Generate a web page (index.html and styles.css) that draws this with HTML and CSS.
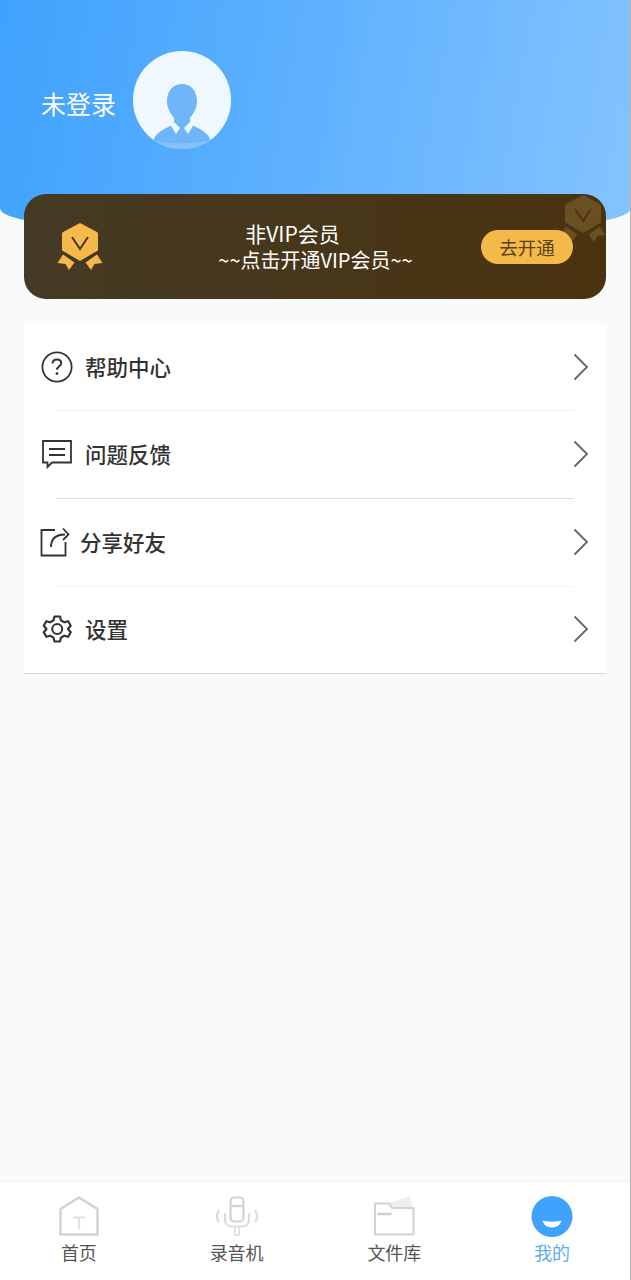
FILE: index.html
```html
<!DOCTYPE html>
<html lang="zh-CN">
<head>
<meta charset="utf-8">
<title>我的</title>
<link rel="stylesheet" href="styles.css">
</head>
<body>
<div class="page">
  <header class="hero">
    <span class="login-text">未登录</span>
    <svg class="avatar" viewBox="0 0 98 98">
      <defs><clipPath id="avatar-clip"><circle cx="49" cy="49" r="49"/></clipPath></defs>
      <circle cx="49" cy="49" r="49" fill="#eff8fe"/>
      <g clip-path="url(#avatar-clip)">
        <path d="M20 90C22 82 32 77 42 73L56 73C66 77 76 82 78 90L78 98L20 98Z" fill="#6fb5fa"/>
        <path d="M14 87C30 94 68 94 84 87L84 100L14 100Z" fill="#85c1fb"/>
        <path d="M49 33C58 33 64 40 64 50C64 58 60 63 57 67L57 75L41 75L41 67C38 63 34 58 34 50C34 40 40 33 49 33Z" fill="#6fb5fa"/>
        <path d="M40 70L47 77L43 83L37 73Z" fill="#eff8fe"/>
        <path d="M58 70L51 77L55 83L61 73Z" fill="#eff8fe"/>
      </g>
    </svg>
  </header>

  <section class="vip-card">
    <svg class="medal" viewBox="0 0 90 90">
      <path d="M50 23L67 32Q68 33 68 34L68 50Q68 51 67 51L50 61L33 51Q32 51 32 50L32 34Q32 33 33 32Z" fill="#f5b94a"/>
      <path d="M33 54.500L44.500 62.500L39 70L35.500 64L27.500 63Z" fill="#f5b94a"/>
      <path d="M67 54.500L55.500 62.500L61 70L64.500 64L72.500 63Z" fill="#f5b94a"/>
      <path d="M42 37L50 49L58 37" fill="none" stroke="#443520" stroke-width="2"/>
    </svg>
    <div class="vip-text">
      <div class="vip-title">非VIP会员</div>
      <div class="vip-sub">~~点击开通VIP会员~~</div>
    </div>
    <button class="vip-btn">去开通</button>
    <svg class="medal-mark" viewBox="0 0 90 90">
      <path d="M50 23L67 32Q68 33 68 34L68 50Q68 51 67 51L50 61L33 51Q32 51 32 50L32 34Q32 33 33 32Z" fill="#6a4f22"/>
      <path d="M33 54.500L44.500 62.500L39 70L35.500 64L27.500 63Z" fill="#6a4f22"/>
      <path d="M67 54.500L55.500 62.500L61 70L64.500 64L72.500 63Z" fill="#6a4f22"/>
      <path d="M42 37L50 49L58 37" fill="none" stroke="#4a3412" stroke-width="2"/>
    </svg>
  </section>

  <nav class="menu">
    <div class="row row-first">
      <svg class="row-icon" viewBox="0 0 34 34">
        <circle cx="17" cy="17" r="14.600" fill="none" stroke="#333" stroke-width="1.800"/>
        <path d="M12.600 13.600C12.600 10.800 14.600 9.600 17 9.600C19.400 9.600 21.200 11 21.200 13.200C21.200 16.200 17 16.400 17 19.800" fill="none" stroke="#333" stroke-width="2"/>
        <circle cx="17" cy="23.600" r="1.400" fill="#333"/>
      </svg>
      <span class="row-label">帮助中心</span>
      <svg class="chev" viewBox="0 0 16 28"><path d="M1.500 1.500L14 14L1.500 26.500" fill="none" stroke="#666" stroke-width="1.800"/></svg>
    </div>
    <div class="row row-strong">
      <svg class="row-icon" viewBox="0 0 34 34">
        <path d="M3 4H31V25.500H12L7.500 30V25.500H3Z" fill="none" stroke="#333" stroke-width="1.800"/>
        <path d="M9 12H25M9 18H25" fill="none" stroke="#333" stroke-width="1.800"/>
      </svg>
      <span class="row-label">问题反馈</span>
      <svg class="chev" viewBox="0 0 16 28"><path d="M1.500 1.500L14 14L1.500 26.500" fill="none" stroke="#666" stroke-width="1.800"/></svg>
    </div>
    <div class="row row-faint row-share">
      <svg class="row-icon" viewBox="0 0 34 34">
        <path d="M16 5H2.500V30.500H26.500V17" fill="none" stroke="#333" stroke-width="1.800"/>
        <path d="M12 22C12 14 17 9.500 26 9.500" fill="none" stroke="#333" stroke-width="1.800"/>
        <path d="M24 3.500L29.500 9.500L24 15" fill="none" stroke="#333" stroke-width="1.800"/>
      </svg>
      <span class="row-label">分享好友</span>
      <svg class="chev" viewBox="0 0 16 28"><path d="M1.500 1.500L14 14L1.500 26.500" fill="none" stroke="#666" stroke-width="1.800"/></svg>
    </div>
    <div class="row row-last">
      <svg class="row-icon" viewBox="0 0 34 34">
        <path d="M14.500 4.500H20L21 8.400L24.300 10.300L28.200 9.200L30.700 13.700L28 17L30.700 20.300L28.200 24.800L24.300 23.700L21 25.600L20 29.500H14.500L13.500 25.600L10.200 23.700L6.300 24.800L3.800 20.300L6.500 17L3.800 13.700L6.300 9.200L10.200 10.300L13.500 8.400Z" fill="none" stroke="#333" stroke-width="2.200" stroke-linejoin="round"/>
        <circle cx="17.200" cy="17" r="5" fill="none" stroke="#333" stroke-width="2"/>
      </svg>
      <span class="row-label">设置</span>
      <svg class="chev" viewBox="0 0 16 28"><path d="M1.500 1.500L14 14L1.500 26.500" fill="none" stroke="#666" stroke-width="1.800"/></svg>
    </div>
  </nav>

  <footer class="tabbar">
    <div class="tab">
      <svg class="tab-icon" viewBox="0 0 44 44">
        <path d="M3.500 14L22 2.500L40.500 14V39.500H3.500Z" fill="none" stroke="#d2d2d2" stroke-width="2.500" stroke-linejoin="round"/>
        <path d="M16 22.500H28M22 22.500V34" fill="none" stroke="#e2e2e2" stroke-width="2.200"/>
      </svg>
      <span class="tab-label">首页</span>
    </div>
    <div class="tab">
      <svg class="tab-icon" viewBox="0 0 44 44">
        <rect x="15.500" y="2.500" width="13" height="24" rx="4" fill="none" stroke="#d2d2d2" stroke-width="2.200"/>
        <path d="M15.500 11H28.500" stroke="#d2d2d2" stroke-width="2.200"/>
        <path d="M10 18V25C10 29 13 31.500 17 31.500H27C31 31.500 34 29 34 25V18" fill="none" stroke="#dcdcdc" stroke-width="2.200"/>
        <path d="M20 31.500V40H24V31.500" fill="none" stroke="#e2e2e2" stroke-width="2"/>
        <path d="M4 15C1.500 19 1.500 24 4 27M40 15C42.500 19 42.500 24 40 27" fill="none" stroke="#dcdcdc" stroke-width="2.400"/>
      </svg>
      <span class="tab-label">录音机</span>
    </div>
    <div class="tab">
      <svg class="tab-icon" viewBox="0 0 44 44">
        <path d="M17 8L38 1L41 13L20 13Z" fill="#eeeeee"/>
        <path d="M3 8.500H17L20 13H41.500V39.500H3Z" fill="#fff" stroke="#d2d2d2" stroke-width="2" stroke-linejoin="round"/>
        <path d="M5.500 19H19.500" stroke="#cfcfcf" stroke-width="2.500"/>
      </svg>
      <span class="tab-label">文件库</span>
    </div>
    <div class="tab tab-active">
      <svg class="tab-icon" viewBox="0 0 44 44">
        <circle cx="22" cy="21.500" r="20.500" fill="#3fa2fd"/>
        <path d="M12.500 25.500C17 27 27 27 31.500 25.500C30 30.500 26.500 32.500 22 32.500C17.500 32.500 14 30.500 12.500 25.500Z" fill="#fff"/>
      </svg>
      <span class="tab-label">我的</span>
    </div>
  </footer>
</div>
</body>
</html>
```

FILE: styles.css
```css
* {
  box-sizing: border-box;
}

html,
body {
  margin: 0;
  padding: 0;
}

body {
  font-family: "Noto Sans CJK SC", "Noto Sans", sans-serif;
  background: #fafafa;
}

.page {
  position: relative;
  display: flex;
  flex-direction: column;
  height: 1280px;
  background: #fafafa;
}

.page::after {
  content: "";
  position: absolute;
  top: 0;
  right: 0;
  bottom: 0;
  width: 1px;
  background: #b4b4b4;
}

.hero {
  display: flex;
  align-items: flex-start;
  height: 224px;
  padding: 51px 0 0 41px;
  background: linear-gradient(100deg, #3fa2fd 0%, #5cb0fe 45%, #84c3ff 100%);
  border-radius: 0 0 70px 70px / 0 0 16px 16px;
}

.login-text {
  margin-top: 34px;
  font-size: 25px;
  line-height: 36px;
  color: #fff;
}

.avatar {
  width: 98px;
  height: 98px;
  margin-left: 17px;
}

.vip-card {
  position: relative;
  display: flex;
  align-items: center;
  height: 105px;
  margin: -30px 25px 0 24px;
  overflow: hidden;
  border-radius: 22px;
  background: linear-gradient(90deg, #453a25 0%, #4a330f 100%);
}

.medal {
  flex: none;
  width: 90px;
  height: 90px;
  margin: 0 0 3px 6px;
}

.vip-text {
  flex: 1;
  margin-left: 6px;
  padding-bottom: 1px;
  text-align: center;
  color: #fff;
}

.vip-title {
  padding-right: 22px;
  font-size: 21px;
  line-height: 28px;
}

.vip-sub {
  padding-left: 24px;
  font-size: 20px;
  line-height: 26px;
}

.vip-btn {
  flex: none;
  position: relative;
  z-index: 1;
  width: 92px;
  height: 34px;
  margin-right: 33px;
  padding: 0;
  border: 0;
  border-radius: 17px;
  background: #f5b94a;
  color: #5a3f10;
  font-family: inherit;
  font-size: 18.500px;
  line-height: 34px;
}

.medal-mark {
  position: absolute;
  top: -22px;
  left: 509px;
  width: 90px;
  height: 90px;
}

.menu {
  margin: 25px 25px 0 24px;
  background: #fff;
  border-bottom: 1px solid #dcdcdc;
}

.row {
  position: relative;
  display: flex;
  align-items: center;
  height: 88px;
  padding: 0 17px 2px 16px;
}

.row::after {
  content: "";
  position: absolute;
  left: 32px;
  right: 32px;
  bottom: 0;
  height: 1px;
  background: #eeeeee;
}

.row-first {
  height: 87px;
}

.row-strong::after {
  background: #dddddd;
}

.row-faint::after {
  background: #f4f4f4;
}

.row-last {
  height: 86px;
}

.row-last::after {
  display: none;
}

.row-icon {
  flex: none;
  width: 34px;
  height: 34px;
}

.row-label {
  flex: 1;
  margin-left: 11px;
  font-size: 21.500px;
  font-weight: 500;
  line-height: 30px;
  color: #333;
}

.row-share .row-icon {
  margin-left: -1px;
}

.row-share .row-label {
  margin-left: 7px;
}

.chev {
  flex: none;
  width: 16px;
  height: 28px;
}

.tabbar {
  display: grid;
  grid-template-columns: repeat(4, 1fr);
  height: 99px;
  margin-top: auto;
  background: #fff;
  border-top: 1px solid #f2f2f2;
}

.tab {
  display: flex;
  flex-direction: column;
  align-items: center;
  padding-top: 13px;
}

.tab-icon {
  width: 44px;
  height: 44px;
}

.tab-label {
  font-size: 18px;
  line-height: 26px;
  color: #555;
}

.tab-active .tab-label {
  color: #62acea;
}
```
